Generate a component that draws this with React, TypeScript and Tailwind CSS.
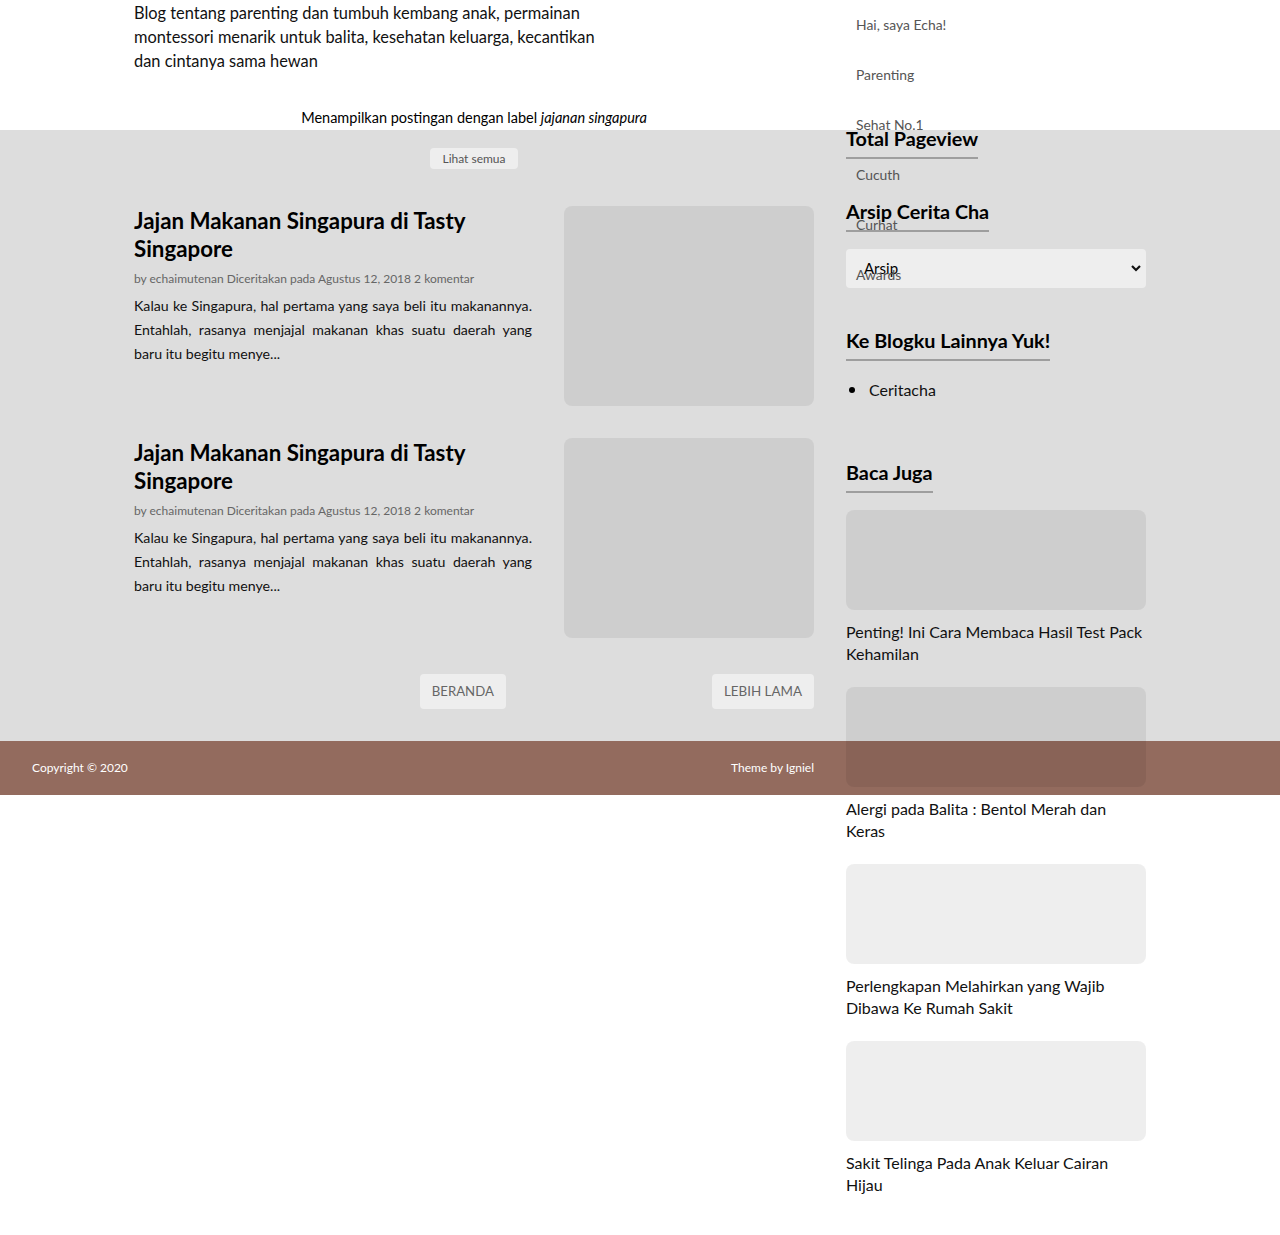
import React from "react";

const navItems = ["Hai, saya Echa!", "Parenting", "Sehat No.1", "Cucuth", "Curhat", "Awards"];

const bacaJuga: string[][] = [
  ["Penting! Ini Cara Membaca Hasil Test Pack", "Kehamilan"],
  ["Alergi pada Balita : Bentol Merah dan", "Keras"],
  ["Perlengkapan Melahirkan yang Wajib", "Dibawa Ke Rumah Sakit"],
  ["Sakit Telinga Pada Anak Keluar Cairan", "Hijau"],
];

function Post() {
  return (
    <div className="flex gap-8">
      <div className="w-[398px] pt-px">
        <h2 className="text-[22.3px] font-bold leading-[28px] text-black">
          Jajan Makanan Singapura di Tasty Singapore
        </h2>
        <div className="mt-[7px] text-[12px] leading-[18px] text-[#666]">
          by echaimutenan Diceritakan pada Agustus 12, 2018 2 komentar
        </div>
        <p className="mt-[6px] text-[14.2px] leading-[24px] text-[#111]">
          <span className="block text-justify [text-align-last:justify]">
            Kalau ke Singapura, hal pertama yang saya beli itu makanannya.
          </span>
          <span className="block text-justify [text-align-last:justify]">
            Entahlah, rasanya menjajal makanan khas suatu daerah yang
          </span>
          <span className="block">baru itu begitu menye...</span>
        </p>
      </div>
      <div className="h-[200px] w-[250px] rounded-lg bg-black/[0.067]" />
    </div>
  );
}

function WidgetTitle({ children }: { children: React.ReactNode }) {
  return (
    <h3 className="inline-block border-b-2 border-[#9e9e9e] pb-[7px] text-[19.8px] font-bold leading-[24px] text-black">
      {children}
    </h3>
  );
}

export default function App() {
  return (
    <div className="relative min-h-[1235px] bg-white font-['Lato',sans-serif] text-[#111]">
      {/* header */}
      <header className="h-[130px]">
        <div className="pl-[134px] pt-px">
          <p className="text-[16.4px] leading-[24px] text-[#111]">
            Blog tentang parenting dan tumbuh kembang anak, permainan
            <br />
            montessori menarik untuk balita, kesehatan keluarga, kecantikan
            <br />
            dan cintanya sama hewan
          </p>
          <div className="mt-[35px] w-[680px] text-center text-[14.5px] leading-[20px] text-black">
            Menampilkan postingan dengan label <i>jajanan singapura</i>
          </div>
        </div>
      </header>

      {/* main gray area */}
      <main className="bg-[#dddddd] pb-8 pl-[134px] pt-[18px]">
        <div className="w-[680px]">
          <div className="flex justify-center">
            <span className="rounded-[4px] bg-[#eeeeee] px-3 text-[12px] leading-[21px] text-[#555]">Lihat semua</span>
          </div>
          <div className="mt-[37px] flex flex-col gap-8">
            <Post />
            <Post />
          </div>
          <div className="mt-9 flex justify-end gap-[206px]">
            <span className="rounded-[4px] bg-[#eeeeee] px-3 text-[13.2px] uppercase leading-[35px] text-[#666]">
              Beranda
            </span>
            <span className="rounded-[4px] bg-[#eeeeee] px-3 text-[13.4px] uppercase leading-[35px] text-[#666]">
              Lebih Lama
            </span>
          </div>
        </div>
      </main>

      {/* footer */}
      <footer className="flex h-[54px] w-full items-center bg-[#936b5e]">
        <div className="flex w-[814px] items-center justify-between pl-8 text-[12px] text-white">
          <span>Copyright © 2020</span>
          <span>Theme by Igniel</span>
        </div>
      </footer>

      {/* sidebar (overflows the layout) */}
      <aside className="absolute left-[846px] top-[126px] w-[300px]">
        <WidgetTitle>Total Pageview</WidgetTitle>
        <div className="mt-[40px]">
          <WidgetTitle>Arsip Cerita Cha</WidgetTitle>
        </div>
        <div className="relative mt-[17px]">
          <div className="flex h-[39px] w-[300px] items-center rounded-[4px] bg-[#eeeeee] pl-[18px] text-[15px] text-black">
            Arsip
          </div>
          <svg
            className="absolute right-[4px] top-[15px]"
            width="12"
            height="8"
            viewBox="0 0 12 8"
            fill="none"
            stroke="#111"
            strokeWidth="2.2"
          >
            <path d="M2 2 L6 6 L10 2" />
          </svg>
        </div>
        <div className="mt-[40px]">
          <WidgetTitle>Ke Blogku Lainnya Yuk!</WidgetTitle>
        </div>
        <div className="mt-[18px] flex items-center text-[16px] leading-[22px] text-[#111]">
          <span className="ml-[3px] h-[6px] w-[6px] rounded-full bg-black" />
          <span className="ml-[14px]">Ceritacha</span>
        </div>
        <div className="mt-[59px]">
          <WidgetTitle>Baca Juga</WidgetTitle>
        </div>
        <div className="mt-[17px] flex flex-col gap-[23px]">
          {bacaJuga.map((t, i) => (
            <div key={i}>
              <div className="h-[100px] w-[300px] rounded-lg bg-black/[0.067]" />
              <div className="mt-[11px] whitespace-nowrap text-[16px] leading-[21.5px] text-[#111]">
                {t[0]}
                <br />
                {t[1]}
              </div>
            </div>
          ))}
        </div>
      </aside>

      {/* top navigation menu (overflows over the sidebar) */}
      <nav className="absolute left-[846px] top-0 w-[300px]">
        <ul className="flex flex-col">
          {navItems.map((n) => (
            <li key={n} className="flex h-[50px] items-center pl-[10px] text-[13.9px] text-[#555]">
              {n}
            </li>
          ))}
        </ul>
      </nav>
    </div>
  );
}
